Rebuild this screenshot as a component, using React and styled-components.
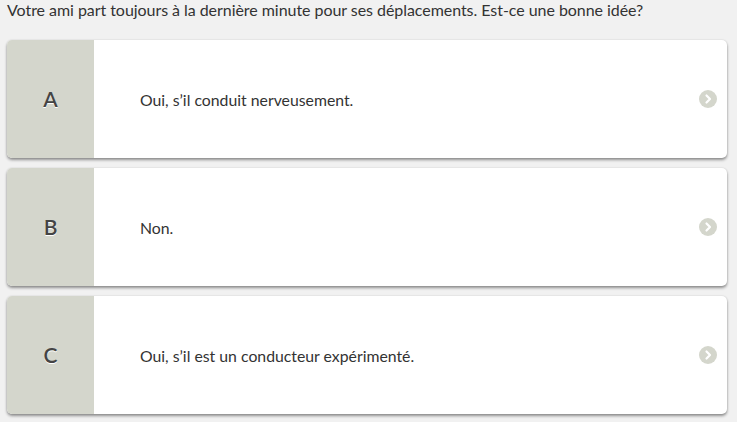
import React from 'react'
import styled, { createGlobalStyle } from 'styled-components'

const GlobalStyle = createGlobalStyle`
    html, body {
        margin: 0;
        padding: 0;
        background: #f1f1f1;
        font-family: Lato, "Open Sans", sans-serif;
        color: #333;
    }
`

const Page = styled.div`
    padding: 0 10px 8px 7px;
`

const Question = styled.p`
    margin: 0;
    height: 40px;
    line-height: 20px;
    font-size: 16px;
    letter-spacing: -0.05px;
    color: #333;
`

const Answers = styled.div`
    display: flex;
    flex-direction: column;
    gap: 10px;
`

const Card = styled.div`
    display: flex;
    height: 118px;
    background: #fff;
    border-radius: 5px;
    overflow: hidden;
    box-shadow: 0 2px 3px rgba(0, 0, 0, 0.4), 0 0 2px rgba(0, 0, 0, 0.12);
    cursor: pointer;
`

const Letter = styled.div`
    flex: 0 0 87px;
    display: flex;
    align-items: center;
    justify-content: center;
    padding-bottom: 2px;
    background: #d4d6cc;
    font-size: 21px;
    font-weight: 600;
    color: #444;
    text-shadow: 0 1px 0 #fff;
`

const Text = styled.div`
    flex: 1;
    display: flex;
    align-items: center;
    padding-left: 46px;
    font-size: 15.8px;
    color: #333;
`

const Arrow = styled.div`
    display: flex;
    align-items: center;
    padding-right: 10px;
`

const Chevron = () => (
    <svg width="18" height="18" viewBox="0 0 18 18">
        <circle cx="9" cy="9" r="9" fill="#d4d6cc" />
        <path d="M7.5 5.5 L11 9 L7.5 12.5" fill="none" stroke="#fff" strokeWidth="2.2" strokeLinecap="round" strokeLinejoin="round" />
    </svg>
)

const answers = [
    { letter: 'A', text: 'Oui, s’il conduit nerveusement.' },
    { letter: 'B', text: 'Non.' },
    { letter: 'C', text: 'Oui, s’il est un conducteur expérimenté.' }
]

export default function App() {
    return (
        <Page>
            <GlobalStyle />
            <Question>Votre ami part toujours à la dernière minute pour ses déplacements. Est-ce une bonne idée?</Question>
            <Answers>
                {answers.map(a => (
                    <Card key={a.letter}>
                        <Letter>{a.letter}</Letter>
                        <Text>{a.text}</Text>
                        <Arrow><Chevron /></Arrow>
                    </Card>
                ))}
            </Answers>
        </Page>
    )
}
